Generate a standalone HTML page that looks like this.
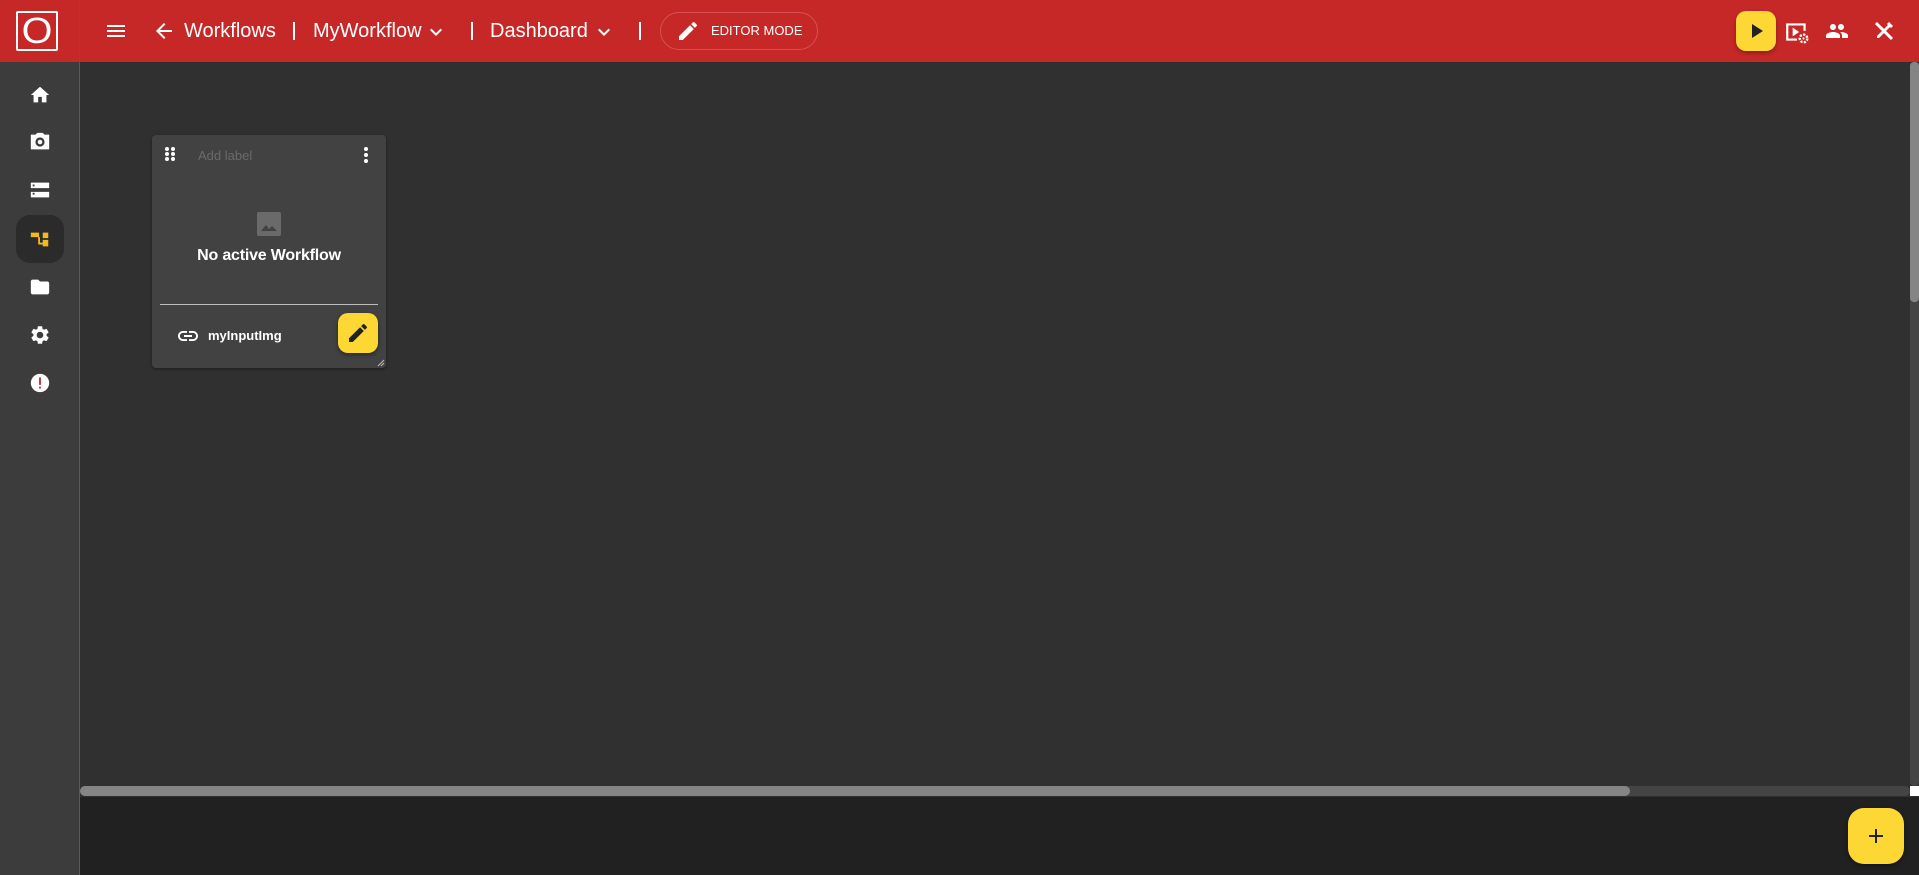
<!DOCTYPE html>
<html><head><meta charset="utf-8"><style>
*{margin:0;padding:0;box-sizing:border-box}
body{width:1919px;height:875px;overflow:hidden;background:#303030;font-family:"Liberation Sans",sans-serif;position:relative}
.a{position:absolute}
.hdr{left:0;top:0;width:1919px;height:62px;background:#c62828}
.t{color:#fff;font-size:20px;white-space:nowrap}
.sep{width:2px;height:18px;background:#fff;top:22px}
svg{display:block}
</style></head><body>
<div class="a hdr"></div>
<div class="a" style="left:79px;top:0;width:1px;height:875px;background:#5a5a5a"></div>
<div class="a" style="left:0;top:62px;width:79px;height:813px;background:#3c3c3c"></div>
<!-- logo -->
<div class="a" style="left:16px;top:11px;width:42px;height:40px;border:2px solid #fff;border-radius:2px"></div>
<div class="a" style="left:16px;top:9px;width:42px;text-align:center;color:#fff;font-size:36px;line-height:44px;transform:scaleX(1.1)">O</div>
<!-- menu -->
<svg class="a" style="left:104px;top:19px" width="24" height="24" viewBox="0 0 24 24"><path d="M3 18h18v-2H3v2zm0-5h18v-2H3v2zm0-7v2h18V6H3z" fill="#fff"/></svg>
<svg class="a" style="left:152px;top:19px" width="24" height="24" viewBox="0 0 24 24"><path d="M20 11H7.83l5.59-5.59L12 4l-8 8 8 8 1.41-1.41L7.83 13H20v-2z" fill="#fff"/></svg>
<div class="a t" style="left:184px;top:20px">Workflows</div>
<div class="a sep" style="left:293px"></div>
<div class="a t" style="left:313px;top:20px">MyWorkflow</div>
<svg class="a" style="left:424px;top:20px" width="24" height="24" viewBox="0 0 24 24"><path d="M7.41 8.59L12 13.17l4.59-4.58L18 10l-6 6-6-6z" fill="#fff"/></svg>
<div class="a sep" style="left:471px"></div>
<div class="a t" style="left:490px;top:20px">Dashboard</div>
<svg class="a" style="left:592px;top:20px" width="24" height="24" viewBox="0 0 24 24"><path d="M7.41 8.59L12 13.17l4.59-4.58L18 10l-6 6-6-6z" fill="#fff"/></svg>
<div class="a sep" style="left:639px"></div>
<div class="a" style="left:660px;top:12px;width:158px;height:38px;border:1px solid #d85050;border-radius:19px"></div>
<svg class="a" style="left:676px;top:19px" width="24" height="24" viewBox="0 0 24 24"><path d="M3 17.25V21h3.75L17.81 9.94l-3.75-3.75L3 17.25zM20.71 7.04a1 1 0 000-1.41l-2.34-2.34a1 1 0 00-1.41 0l-1.83 1.83 3.75 3.75 1.83-1.83z" fill="#fff"/></svg>
<div class="a" style="left:711px;top:23px;color:#fff;font-size:13px">EDITOR MODE</div>
<!-- right -->
<div class="a" style="left:1736px;top:11px;width:40px;height:40px;background:#fdd835;border-radius:10px;box-shadow:0 2px 4px rgba(0,0,0,.3)"></div>
<svg class="a" style="left:1744px;top:19px" width="24" height="24" viewBox="0 0 24 24"><path d="M8 5v14l11-7z" fill="#222"/></svg>
<svg class="a" style="left:1784px;top:19px" width="26" height="26" viewBox="0 0 24 24"><path d="M2 4h18v7h-2V6H4v12h8v2H2z" fill="#fff"/><path d="M8 8v8l6-4z" fill="#fff"/><circle cx="18" cy="18" r="3.5" fill="none" stroke="#fff" stroke-width="2.2" stroke-dasharray="2 1.2"/><circle cx="18" cy="18" r="1" fill="#fff"/></svg>
<svg class="a" style="left:1825px;top:19px" width="24" height="24" viewBox="0 0 24 24"><path d="M16 11c1.66 0 2.99-1.34 2.99-3S17.66 5 16 5s-3 1.34-3 3 1.34 3 3 3zm-8 0c1.66 0 2.99-1.340 2.99-3S9.66 5 8 5 5 6.34 5 8s1.34 3 3 3zm0 2c-2.33 0-7 1.17-7 3.5V19h14v-2.5c0-2.33-4.67-3.5-7-3.5zm8 0c-.29 0-.62.02-.97.05 1.16.84 1.97 1.97 1.97 3.45V19h6v-2.5c0-2.33-4.67-3.5-7-3.5z" fill="#fff"/></svg>
<svg class="a" style="left:1872px;top:19px" width="24" height="24" viewBox="0 0 24 24"><path d="M4 4l16 16" stroke="#fff" stroke-width="3"/><path d="M5 19l2 0 12-12-2-2L5 17z" fill="#fff"/><path d="M17 3l4 4-2 2-4-4z" fill="#fff"/></svg>
<!-- sidebar -->
<div class="a" style="left:16px;top:215px;width:48px;height:48px;background:#2b2b2b;border-radius:14px"></div>
<svg class="a" style="left:29px;top:84px" width="22" height="22" viewBox="0 0 24 24"><path d="M10 20v-6h4v6h5v-8h3L12 3 2 12h3v8z" fill="#fff"/></svg>
<svg class="a" style="left:29px;top:131px" width="22" height="22" viewBox="0 0 24 24"><path d="M9 2L7.170 4H2v16h20V4h-5.17L15 2H9zm3 15a5 5 0 110-10 5 5 0 010 10zm0-2.5a2.5 2.5 0 100-5 2.5 2.5 0 000 5z" fill="#fff"/></svg>
<svg class="a" style="left:29px;top:179px" width="22" height="22" viewBox="0 0 24 24"><path d="M2 20h20v-6H2v6zm2-5h2v2H4v-2zM2 4v6h20V4H2zm4 4H4V6h2v2z" fill="#fff"/></svg>
<svg class="a" style="left:29px;top:228px" width="22" height="22" viewBox="0 0 24 24"><path d="M2 5h9v5H2zM15 5h6v6h-6zM15 13h6v7h-6zM8 10h2v8h5v-2h-3v-6z" fill="#f5b820"/></svg>
<svg class="a" style="left:29px;top:276px" width="22" height="22" viewBox="0 0 24 24"><path d="M10 4H4c-1.1 0-2 .9-2 2v12c0 1.1.9 2 2 2h16c1.1 0 2-.9 2-2V8c0-1.1-.9-2-2-2h-8l-2-2z" fill="#fff"/></svg>
<svg class="a" style="left:29px;top:324px" width="22" height="22" viewBox="0 0 24 24"><path d="M19.14 12.94c.04-.3.06-.61.06-.94 0-.32-.02-.64-.07-.94l2.03-1.58a.49.49 0 00.12-.61l-1.92-3.32a.488.488 0 00-.59-.22l-2.39.96c-.5-.38-1.03-.7-1.62-.94l-.36-2.54a.484.484 0 00-.48-.41h-3.84c-.24 0-.43.17-.47.41l-.36 2.54c-.59.24-1.13.57-1.62.94l-2.39-.96c-.22-.08-.47 0-.59.22L2.74 8.87c-.12.21-.08.47.12.61l2.03 1.58c-.05.3-.09.63-.09.94s.02.64.07.94l-2.03 1.58a.49.49 0 00-.12.61l1.92 3.32c.12.22.37.29.59.22l2.39-.96c.5.38 1.03.7 1.62.94l.36 2.54c.05.24.24.41.48.41h3.84c.24 0 .44-.17.47-.41l.36-2.54c.59-.24 1.13-.56 1.62-.94l2.39.96c.22.08.47 0 .59-.22l1.92-3.32c.12-.22.07-.47-.12-.61l-2.01-1.58zM12 15.6c-1.98 0-3.6-1.62-3.6-3.6s1.62-3.6 3.6-3.6 3.6 1.62 3.6 3.6-1.62 3.6-3.6 3.6z" fill="#fff"/></svg>
<svg class="a" style="left:29px;top:372px" width="22" height="22" viewBox="0 0 24 24"><circle cx="12" cy="12" r="10" fill="#fff"/><path d="M11 6h2v8h-2zM11 16h2v2h-2z" fill="#c62828"/></svg>
<!-- card -->
<div class="a" style="left:152px;top:135px;width:234px;height:233px;background:#424242;border-radius:4px;box-shadow:0 1px 3px rgba(0,0,0,.4)"></div>
<svg class="a" style="left:164px;top:146px" width="14" height="16" viewBox="0 0 14 16"><g fill="#fff"><circle cx="3" cy="3" r="2"/><circle cx="9" cy="3" r="2"/><circle cx="3" cy="8" r="2"/><circle cx="9" cy="8" r="2"/><circle cx="3" cy="13" r="2"/><circle cx="9" cy="13" r="2"/></g></svg>
<div class="a" style="left:198px;top:148px;color:#6a6a6a;font-size:13px">Add label</div>
<svg class="a" style="left:362px;top:146px" width="8" height="18" viewBox="0 0 8 18"><g fill="#fff"><circle cx="4" cy="3" r="2"/><circle cx="4" cy="9" r="2"/><circle cx="4" cy="15" r="2"/></g></svg>
<div class="a" style="left:257px;top:212px;width:24px;height:24px;background:#6a6a6a;border-radius:2px"></div>
<svg class="a" style="left:257px;top:212px" width="24" height="24" viewBox="0 0 24 24"><path d="M4 19l5-6 3 4 3-3 5 5z" fill="#424242"/></svg>
<div class="a" style="left:152px;top:247px;width:234px;text-align:center;color:#fff;font-size:16px;font-weight:bold;letter-spacing:-.2px">No active Workflow</div>
<div class="a" style="left:160px;top:304px;width:218px;height:1px;background:#bdbdbd"></div>
<svg class="a" style="left:176px;top:324px" width="24" height="24" viewBox="0 0 24 24"><path d="M3.9 12c0-1.71 1.39-3.1 3.1-3.1h4V7H7c-2.76 0-5 2.24-5 5s2.24 5 5 5h4v-1.9H7c-1.71 0-3.1-1.39-3.1-3.1zM8 13h8v-2H8v2zm9-6h-4v1.9h4c1.71 0 3.1 1.39 3.1 3.1s-1.39 3.1-3.1 3.1h-4V17h4c2.76 0 5-2.24 5-5s-2.24-5-5-5z" fill="#fff"/></svg>
<div class="a" style="left:208px;top:328px;color:#fff;font-size:13px;font-weight:bold">myInputImg</div>
<div class="a" style="left:338px;top:313px;width:40px;height:40px;background:#fdd835;border-radius:10px;box-shadow:0 2px 4px rgba(0,0,0,.4)"></div>
<svg class="a" style="left:346px;top:321px" width="24" height="24" viewBox="0 0 24 24"><path d="M3 17.25V21h3.75L17.81 9.94l-3.75-3.75L3 17.25zM20.71 7.04a1 1 0 000-1.41l-2.34-2.34a1 1 0 00-1.41 0l-1.83 1.83 3.75 3.75 1.83-1.83z" fill="#222"/></svg>
<svg class="a" style="left:377px;top:359px" width="8" height="8" viewBox="0 0 8 8"><path d="M1 7L7 1M4 7L7 4" stroke="#bbb" stroke-width="1"/></svg>
<!-- scrollbars -->
<div class="a" style="left:80px;top:786px;width:1830px;height:10px;background:#444;border-radius:5px"></div>
<div class="a" style="left:80px;top:786px;width:1550px;height:10px;background:#858585;border-radius:5px"></div>
<div class="a" style="left:1910px;top:62px;width:9px;height:724px;background:#444;border-radius:4px"></div>
<div class="a" style="left:1910px;top:62px;width:9px;height:240px;background:#858585;border-radius:4px"></div>
<div class="a" style="left:1910px;top:786px;width:9px;height:10px;background:#fff"></div>
<div class="a" style="left:80px;top:797px;width:1839px;height:78px;background:#212121"></div>
<div class="a" style="left:1848px;top:808px;width:56px;height:56px;background:#fdd835;border-radius:16px;box-shadow:0 2px 5px rgba(0,0,0,.4)"></div>
<svg class="a" style="left:1864px;top:824px" width="24" height="24" viewBox="0 0 24 24"><path d="M19 13h-6v6h-2v-6H5v-2h6V5h2v6h6v2z" fill="#222"/></svg>
</body></html>
